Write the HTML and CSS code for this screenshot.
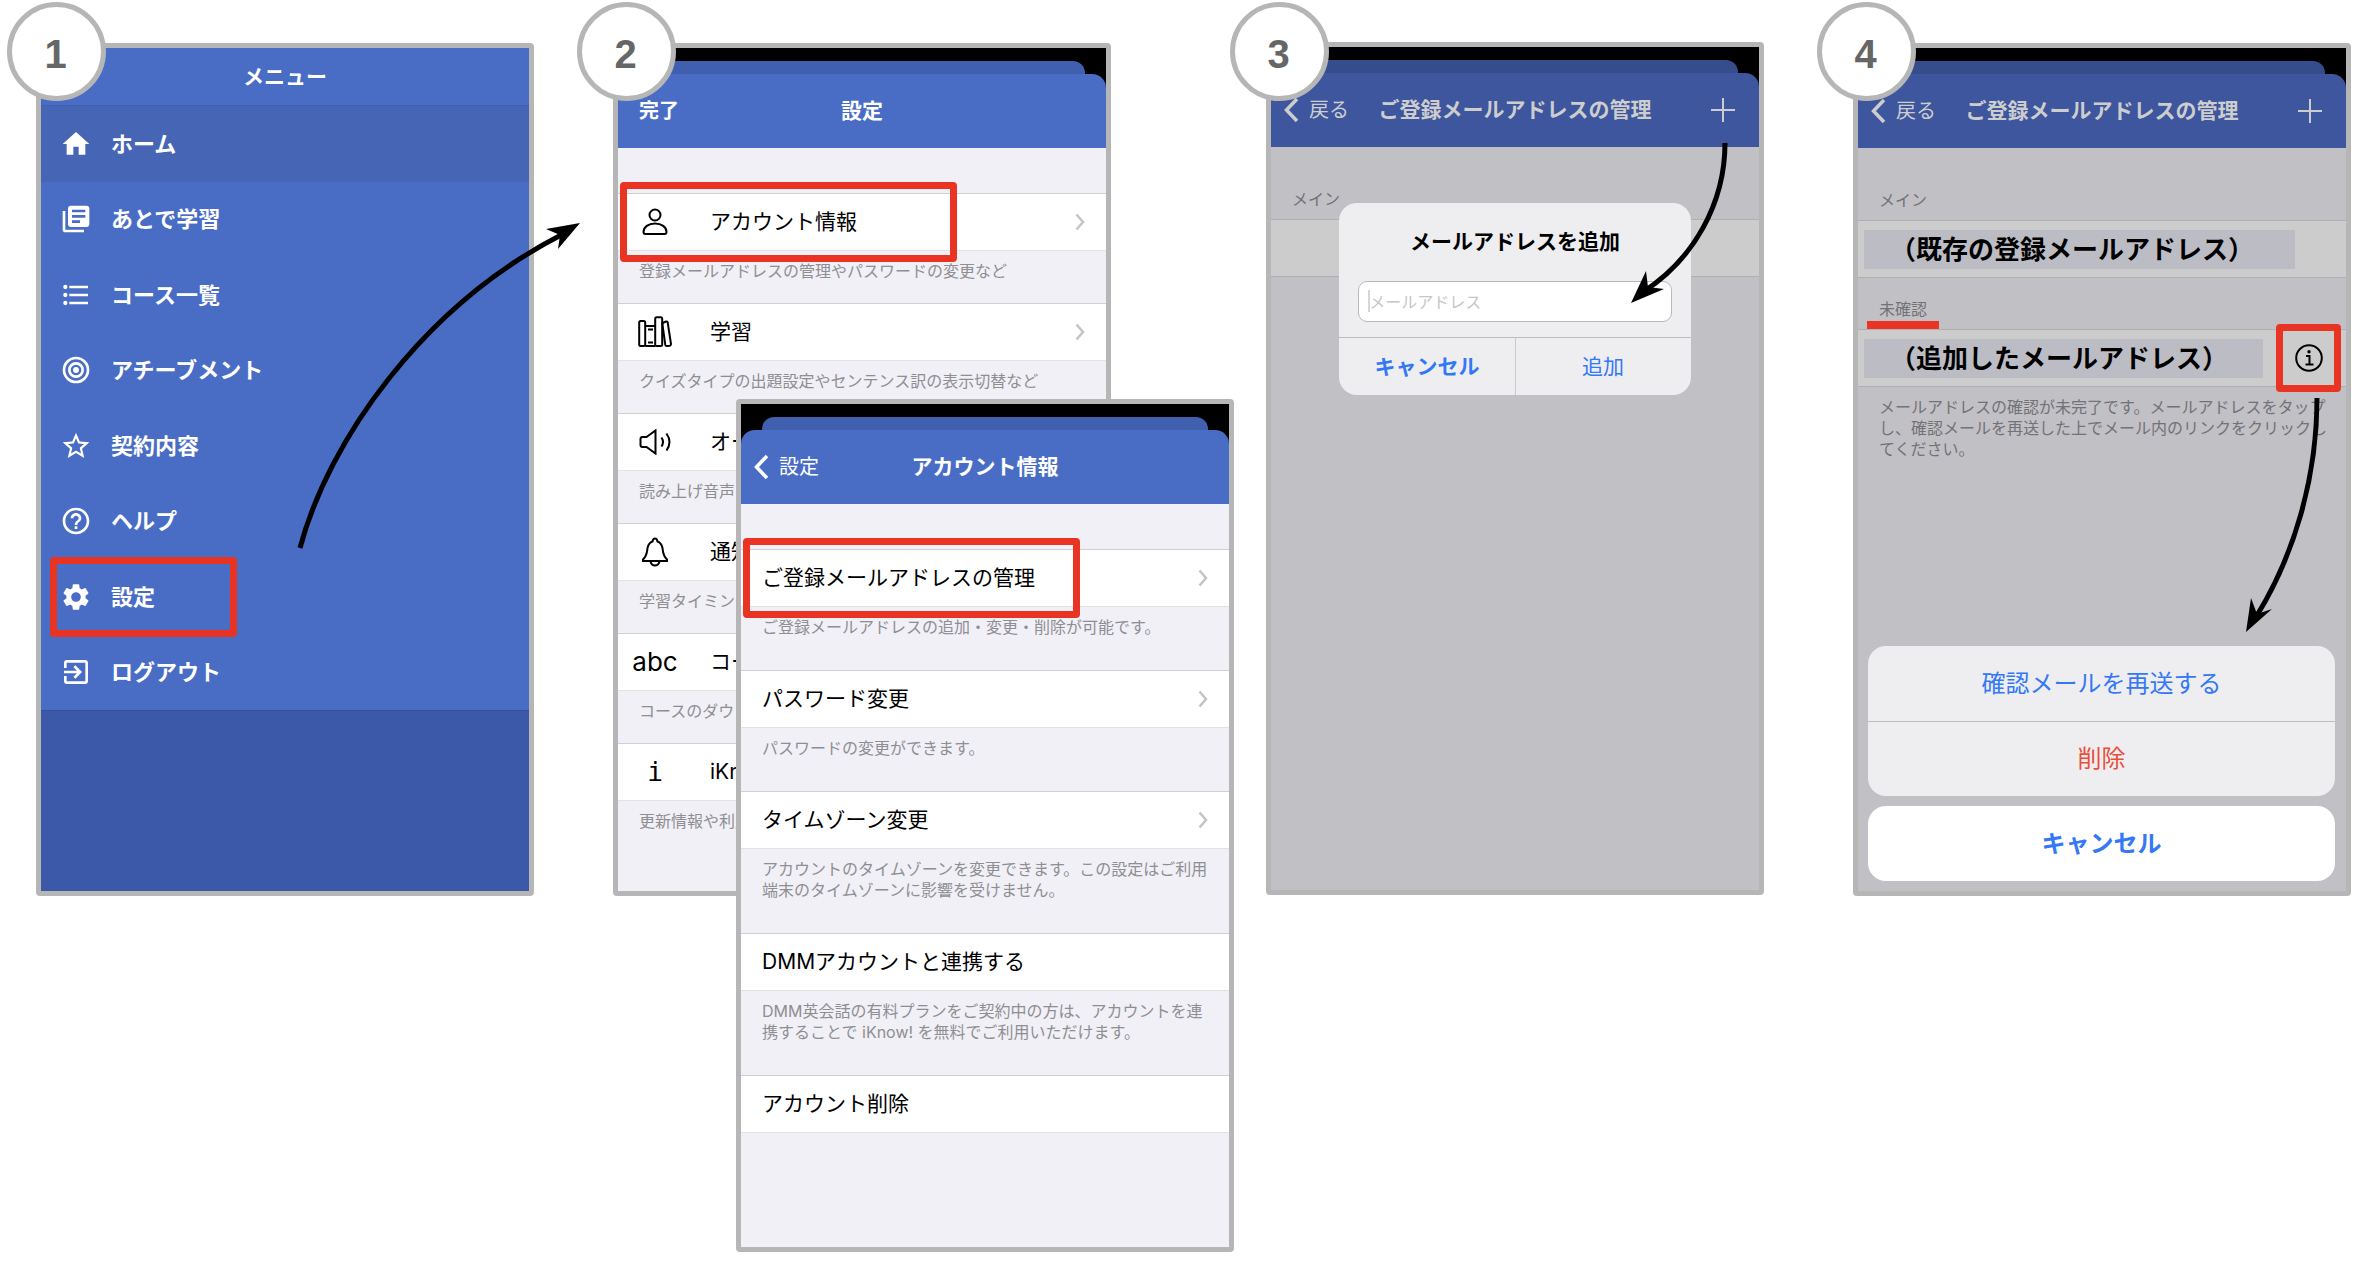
FILE: index.html
```html
<!DOCTYPE html>
<html lang="ja">
<head>
  <meta charset="UTF-8">
  <title>メールアドレスの追加手順</title>
  <link rel="stylesheet" href="styles.css">
</head>
<body>
  <svg class="symbols" aria-hidden="true">
    <symbol id="chevron" viewBox="0 0 10 18"><path d="M1.5 1.5 8 9l-6.500 7.500" fill="none" stroke="currentColor" stroke-width="2.500"/></symbol>
    <symbol id="back" viewBox="0 0 16 26"><path d="M14 2 3.500 13 14 24" fill="none" stroke="currentColor" stroke-width="3.500"/></symbol>
    <symbol id="plus" viewBox="0 0 24 24"><path d="M12 0v24M0 12h24" fill="none" stroke="currentColor" stroke-width="2"/></symbol>
  </svg>

  <main class="steps">
    <!-- 1: メニュー -->
    <section class="step">
      <div class="phone phone-menu">
        <h2 class="menu-title">メニュー</h2>
        <nav class="menu">
          <a href="#" class="menu-item current">
            <svg viewBox="0 0 24 24"><path d="M10 20v-6h4v6h5v-8h3L12 3 2 12h3v8z"/></svg>
            ホーム
          </a>
          <a href="#" class="menu-item">
            <svg viewBox="0 0 24 24"><path d="M4 6H2v14c0 1.100.9 2 2 2h14v-2H4V6zm16-4H8c-1.100 0-2 .9-2 2v12c0 1.100.9 2 2 2h12c1.100 0 2-.9 2-2V4c0-1.100-.9-2-2-2zm-1 9H9V9h10v2zm-4 4H9v-2h6v2zm4-8H9V5h10v2z"/></svg>
            あとで学習
          </a>
          <a href="#" class="menu-item">
            <svg viewBox="0 0 24 24"><circle cx="4" cy="6" r="1.600"/><circle cx="4" cy="12" r="1.600"/><circle cx="4" cy="18" r="1.600"/><path d="M7 5h14v2H7zM7 11h14v2H7zM7 17h14v2H7z"/></svg>
            コース一覧
          </a>
          <a href="#" class="menu-item">
            <svg viewBox="0 0 24 24"><g fill="none" stroke="#fff" stroke-width="2"><circle cx="12" cy="12" r="9"/><circle cx="12" cy="12" r="5"/></g><circle cx="12" cy="12" r="2.200"/></svg>
            アチーブメント
          </a>
          <a href="#" class="menu-item">
            <svg viewBox="0 0 24 24"><path d="M22 9.240l-7.190-.62L12 2 9.190 8.630 2 9.240l5.460 4.730L5.820 21 12 17.270 18.180 21l-1.630-7.030L22 9.240zM12 15.400l-3.760 2.270 1-4.280-3.320-2.880 4.380-.38L12 6.100l1.710 4.040 4.380.38-3.320 2.880 1 4.280L12 15.400z"/></svg>
            契約内容
          </a>
          <a href="#" class="menu-item">
            <svg viewBox="0 0 24 24"><path d="M11 18h2v-2h-2v2zm1-16C6.480 2 2 6.480 2 12s4.480 10 10 10 10-4.480 10-10S17.520 2 12 2zm0 18c-4.410 0-8-3.590-8-8s3.590-8 8-8 8 3.590 8 8-3.590 8-8 8zm0-14c-2.210 0-4 1.790-4 4h2c0-1.100.9-2 2-2s2 .9 2 2c0 2-3 1.750-3 5h2c0-2.250 3-2.500 3-5 0-2.210-1.790-4-4-4z"/></svg>
            ヘルプ
          </a>
          <a href="#" class="menu-item">
            <svg viewBox="0 0 24 24"><path d="M19.140 12.940c.04-.3.060-.61.060-.94 0-.32-.02-.64-.07-.94l2.030-1.580a.49.490 0 0 0 .12-.61l-1.920-3.320a.488.488 0 0 0-.59-.22l-2.390.96c-.5-.38-1.030-.7-1.620-.94l-.36-2.540a.484.484 0 0 0-.48-.41h-3.840c-.24 0-.43.170-.47.410l-.36 2.540c-.59.240-1.130.570-1.620.940l-2.390-.96c-.22-.08-.47 0-.59.220L2.740 8.870c-.12.210-.08.470.12.610l2.030 1.580c-.05.300-.09.630-.09.940s.02.640.070.940l-2.030 1.580a.49.490 0 0 0-.12.610l1.920 3.320c.12.220.37.290.59.220l2.390-.96c.5.380 1.030.7 1.620.94l.36 2.540c.05.240.24.410.48.410h3.840c.24 0 .44-.17.470-.41l.36-2.540c.59-.24 1.130-.56 1.620-.94l2.390.96c.22.080.47 0 .59-.22l1.920-3.320c.12-.22.070-.47-.12-.61l-2.010-1.580zM12 15.600c-1.980 0-3.600-1.620-3.600-3.600s1.620-3.600 3.600-3.600 3.600 1.620 3.600 3.600-1.620 3.600-3.600 3.600z"/></svg>
            設定
            <span class="highlight highlight-menu"></span>
          </a>
          <a href="#" class="menu-item">
            <svg viewBox="0 0 24 24"><path d="M10.090 15.590L11.500 17l5-5-5-5-1.410 1.410L12.670 11H3v2h9.670l-2.580 2.590zM19 3H5c-1.110 0-2 .9-2 2v4h2V5h14v14H5v-4H3v4c0 1.100.89 2 2 2h14c1.100 0 2-.9 2-2V5c0-1.100-.9-2-2-2z"/></svg>
            ログアウト
          </a>
        </nav>
      </div>
      <span class="badge">1</span>
      <svg class="arrow arrow-menu" viewBox="0 0 300 340">
        <path class="arrow-line" d="M10 328C38 222 132 86 273 14"/>
        <path d="M290 3 256 9 270 15 268 29z"/>
      </svg>
    </section>

    <!-- 2: 設定 → アカウント情報 -->
    <section class="step step-settings">
      <div class="phone phone-back">
        <header class="top">
          <div class="sheet-edge"></div>
          <div class="navbar">
            <a href="#" class="nav-left nav-done">完了</a>
            <h2>設定</h2>
          </div>
        </header>
        <div class="list">
          <a href="#" class="cell">
            <span class="cell-icon"><svg width="26" height="28" viewBox="0 0 26 28"><circle cx="13" cy="7" r="5.500"/><path d="M1.500 24c0-5 5-8.500 11.500-8.500S24.500 19 24.500 24q0 2-2 2h-19q-2 0-2-2z"/></svg></span>
            アカウント情報
            <svg class="chevron"><use href="#chevron"/></svg>
            <span class="highlight"></span>
          </a>
          <p class="note">登録メールアドレスの管理やパスワードの変更など</p>
          <a href="#" class="cell">
            <span class="cell-icon"><svg width="34" height="32" viewBox="0 0 34 32"><rect x="1.200" y="5" width="6" height="25" rx="1.500"/><path d="M7.200 10h10M7.200 30h10"/><path d="M10 13.500h5M10 26.500h5"/><rect x="17.200" y="1.200" width="7" height="28.800" rx="1.500"/><path d="M24.500 7 28 5.500q1.500-.3 1.700 1L33 28q0 1.500-1.200 1.700l-3 .4q-1.300 0-1.500-1.200L24.500 9z"/></svg></span>
            学習
            <svg class="chevron"><use href="#chevron"/></svg>
          </a>
          <p class="note">クイズタイプの出題設定やセンテンス訳の表示切替など</p>
          <a href="#" class="cell">
            <span class="cell-icon"><svg width="33" height="26" viewBox="0 0 33 26"><path d="M1.500 10q0-2 2-2h4L16.500 1.500v23L7.500 18h-4q-2 0-2-2z"/><path d="M22.500 8.500q3 4.500 0 9M27.500 4.500q6 8.500 0 17"/></svg></span>
            オー
          </a>
          <p class="note">読み上げ音声の</p>
          <a href="#" class="cell">
            <span class="cell-icon"><svg width="28" height="30" viewBox="0 0 28 30"><path d="M2 22.500C6 18.500 6 15.500 6.500 11Q7.500 6 11.500 4.500 12 1.500 14 1.500t2.500 3Q20.500 6 21.500 11c.5 4.500.5 7.500 4.500 11.500v1.500H2z"/><path d="M9.500 24.500q1 4 4.500 4t4.500-4"/></svg></span>
            通知
          </a>
          <p class="note">学習タイミング</p>
          <a href="#" class="cell">
            <span class="cell-icon">abc</span>
            コー
          </a>
          <p class="note">コースのダウン</p>
          <a href="#" class="cell">
            <span class="cell-icon mono">i</span>
            iKn
          </a>
          <p class="note">更新情報や利用</p>
        </div>
      </div>

      <div class="phone phone-front">
        <header class="top">
          <div class="sheet-edge"></div>
          <div class="navbar">
            <a href="#" class="nav-left"><svg class="back"><use href="#back"/></svg>設定</a>
            <h2>アカウント情報</h2>
          </div>
        </header>
        <div class="list list-roomy">
          <a href="#" class="cell">ご登録メールアドレスの管理
            <svg class="chevron"><use href="#chevron"/></svg>
            <span class="highlight"></span>
          </a>
          <p class="note">ご登録メールアドレスの追加・変更・削除が可能です。</p>
          <a href="#" class="cell">パスワード変更
            <svg class="chevron"><use href="#chevron"/></svg>
          </a>
          <p class="note">パスワードの変更ができます。</p>
          <a href="#" class="cell">タイムゾーン変更
            <svg class="chevron"><use href="#chevron"/></svg>
          </a>
          <p class="note">アカウントのタイムゾーンを変更できます。この設定はご利用端末のタイムゾーンに影響を受けません。</p>
          <a href="#" class="cell">DMMアカウントと連携する</a>
          <p class="note">DMM英会話の有料プランをご契約中の方は、アカウントを連携することで iKnow! を無料でご利用いただけます。</p>
          <a href="#" class="cell">アカウント削除</a>
        </div>
      </div>
      <span class="badge">2</span>
    </section>

    <!-- 3: メールアドレスを追加 -->
    <section class="step step-add">
      <div class="phone dimmed">
        <header class="top">
          <div class="sheet-edge"></div>
          <div class="navbar">
            <a href="#" class="nav-left"><svg class="back"><use href="#back"/></svg>戻る</a>
            <h2>ご登録メールアドレスの管理</h2>
            <button type="button" class="nav-add" aria-label="追加"><svg><use href="#plus"/></svg></button>
          </div>
        </header>
        <h3 class="section-title">メイン</h3>
        <div class="cell"></div>

        <form class="alert">
          <label class="alert-title" for="email">メールアドレスを追加</label>
          <div class="alert-field">
            <input type="email" id="email" placeholder="メールアドレス">
            <span class="caret"></span>
          </div>
          <div class="alert-actions">
            <button type="button" class="strong">キャンセル</button>
            <button type="button">追加</button>
          </div>
        </form>
      </div>
      <span class="badge">3</span>
      <svg class="arrow arrow-add" viewBox="0 0 110 170">
        <path class="arrow-line" d="M99 3C99 63 68 119 17 152"/>
        <path d="M5 163 20 131 22 147 38 149z"/>
      </svg>
    </section>

    <!-- 4: 確認メールの再送 -->
    <section class="step step-confirm">
      <div class="phone dimmed">
        <header class="top">
          <div class="sheet-edge"></div>
          <div class="navbar">
            <a href="#" class="nav-left"><svg class="back"><use href="#back"/></svg>戻る</a>
            <h2>ご登録メールアドレスの管理</h2>
            <button type="button" class="nav-add" aria-label="追加"><svg><use href="#plus"/></svg></button>
          </div>
        </header>
        <h3 class="section-title">メイン</h3>
        <div class="cell cell-mail">
          <span class="mail">（既存の登録メールアドレス）</span>
        </div>
        <h3 class="section-title"><span class="marked">未確認</span></h3>
        <div class="cell cell-mail">
          <span class="mail mail-short">（追加したメールアドレス）</span>
          <button type="button" class="info" aria-label="詳細">
            <svg viewBox="0 0 28 28"><circle cx="14" cy="14" r="12.800"/><path d="M11 12h3.500v8.500M10.500 20.500h8"/><circle class="dot" cx="14" cy="7.800" r="1.700"/></svg>
            <span class="highlight highlight-info"></span>
          </button>
        </div>
        <p class="note">メールアドレスの確認が未完了です。メールアドレスをタップし、確認メールを再送した上でメール内のリンクをクリックしてください。</p>

        <div class="actions">
          <div class="action-group">
            <button type="button">確認メールを再送する</button>
            <button type="button" class="danger">削除</button>
          </div>
          <button type="button" class="cancel">キャンセル</button>
        </div>
      </div>
      <span class="badge">4</span>
      <svg class="arrow arrow-confirm" viewBox="0 0 85 245">
        <path class="arrow-line" d="M77 3C77 83 54 161 16 222"/>
        <path d="M6 237 11 203 17 219 32 214z"/>
      </svg>
    </section>
  </main>
</body>
</html>
```

FILE: styles.css
```css
* {
  box-sizing: border-box;
}

body {
  margin: 0;
  background-color: #fff;
  color: #000;
  font-family: Inter, "Noto Sans CJK JP", sans-serif;
  font-size: 21px;
  line-height: 30px;
}

h2,
h3,
p {
  margin: 0;
  font-size: inherit;
}

a {
  color: inherit;
  text-decoration: none;
}

button {
  padding: 0;
  border: none;
  background: none;
  color: inherit;
  font: inherit;
  cursor: pointer;
}

.symbols {
  display: none;
}

.steps {
  display: flex;
  align-items: flex-start;
  padding: 0 11px 12px 36px;
}

.step {
  position: relative;
  flex: 498 1 0;
  min-width: 0;
  padding-top: 43px;
}

.step-settings {
  display: grid;
  grid-template-columns: 123fr 375fr 123fr;
  align-items: start;
  flex-grow: 621;
  margin-left: 79px;
}

.step-add {
  margin-left: 32px;
  padding-top: 42px;
}

.step-confirm {
  margin-left: 89px;
}

.phone {
  position: relative;
  min-height: 853px;
  border: 5px solid #b6b6b6;
  border-radius: 4px;
  background-color: #f1f0f6;
}

.phone-back {
  grid-area: 1 / 1 / 2 / 3;
}

.phone-front {
  grid-area: 1 / 2 / 2 / 4;
  margin-top: 356px;
}

.badge {
  position: absolute;
  top: 2px;
  left: -36px;
  width: 99px;
  height: 99px;
  padding: 4px 2px 0 0;
  border: 5px solid #b6b6b6;
  border-radius: 50%;
  background-color: #fff;
  color: #666;
  font-family: "Liberation Sans", Arial, sans-serif;
  font-size: 40px;
  font-weight: bold;
  line-height: 86px;
  text-align: center;
}

.step:first-child .badge {
  left: -29px;
}

/* メニュー */
.phone-menu {
  background-color: #3c59a9;
  color: #fff;
  font-size: 22px;
  font-weight: bold;
}

.menu-title {
  padding: 14px 0 13px;
  border-bottom: 1px solid #4060af;
  background-color: #496dc5;
  font-size: 21px;
  text-align: center;
}

.menu {
  display: flex;
  flex-direction: column;
  height: 605px;
  border-bottom: 1px solid #35509a;
  background-color: #496dc5;
}

.menu-item {
  position: relative;
  display: flex;
  flex: 1;
  align-items: center;
  gap: 19px;
  padding-left: 19px;
}

.menu-item svg {
  width: 32px;
  height: 32px;
  fill: #fff;
}

.menu-item.current {
  background-color: #4666b5;
}

/* ナビゲーションバー */
.top {
  padding-top: 13px;
  background-color: #000;
  color: #fff;
}

.sheet-edge {
  height: 13px;
  margin: 0 21px;
  border-radius: 12px 12px 0 0;
  background-color: #405fae;
}

.navbar {
  display: grid;
  grid-template-columns: 1fr auto 1fr;
  align-items: center;
  height: 74px;
  padding: 0 12px;
  border-radius: 14px 14px 0 0;
  background-color: #496dc5;
}

.navbar h2 {
  grid-column: 2;
}

.nav-left {
  display: flex;
  align-items: center;
  gap: 10px;
  font-size: 20px;
}

.nav-done {
  padding-left: 9px;
  font-weight: bold;
}

.back {
  width: 16px;
  height: 26px;
}

.nav-add {
  justify-self: end;
  width: 24px;
  height: 24px;
  margin-right: 12px;
  line-height: 0;
}

.nav-add svg {
  width: 24px;
  height: 24px;
}

/* リスト */
.list {
  padding-top: 45px;
}

.cell {
  position: relative;
  display: flex;
  align-items: center;
  height: 58px;
  padding: 0 21px;
  border-top: 1px solid #d0d0d4;
  border-bottom: 1px solid #e2e2e5;
  background-color: #fff;
}

.cell-icon {
  display: flex;
  justify-content: center;
  width: 44px;
  margin: 0 33px 0 -6px;
  font-size: 26px;
}

.cell-icon svg {
  fill: none;
  stroke: #000;
  stroke-width: 2;
}

.cell-icon.mono {
  font-family: "DejaVu Sans Mono", monospace;
}

.chevron {
  width: 10px;
  height: 18px;
  margin-left: auto;
  color: #c4c4c7;
}

.note {
  padding: 10px 16px 21px 21px;
  color: #8e8e93;
  font-size: 16px;
  line-height: 21px;
}

.list-roomy .note {
  padding-bottom: 32px;
}

.highlight {
  position: absolute;
  top: calc(50% - 40px);
  left: 2px;
  width: 337px;
  height: 80px;
  border: 7px solid #e93323;
  border-radius: 4px;
  pointer-events: none;
}

.highlight-menu {
  left: 9px;
  width: 187px;
}

/* ダイアログの背後の画面 */
.dimmed {
  background-color: #c1c0c5;
}

.dimmed .top {
  color: #cdcdcd;
}

.dimmed .sheet-edge {
  background-color: #354d8b;
}

.dimmed .navbar {
  background-color: #3d569e;
}

.dimmed .cell {
  border-color: #b0afb3;
  background-color: #ccc;
}

.dimmed .note,
.section-title {
  color: #737277;
}

.section-title {
  padding: 21px 21px 9px;
  font-size: 16px;
  font-weight: normal;
  line-height: 21px;
}

.top + .section-title {
  padding-top: 42px;
}

.marked {
  position: relative;
}

.marked::after {
  content: "";
  position: absolute;
  top: 22px;
  left: -12px;
  width: 72px;
  height: 8px;
  background-color: #e93323;
}

.cell-mail {
  justify-content: space-between;
  padding: 0 23px 0 6px;
}

.mail {
  width: 94%;
  padding-left: 26px;
  background-color: #bcbdc4;
  font-size: 26px;
  font-weight: bold;
  line-height: 39px;
  white-space: nowrap;
}

.mail-short {
  width: 87%;
}

.info {
  position: relative;
  width: 28px;
  height: 28px;
  line-height: 0;
}

.info svg {
  fill: none;
  stroke: #000;
  stroke-width: 2;
}

.info .dot {
  fill: #000;
  stroke: none;
}

.highlight-info {
  top: -20px;
  left: -19px;
  width: 65px;
  height: 68px;
}

/* 追加ダイアログ */
.alert {
  position: absolute;
  top: 156px;
  left: 14%;
  width: 72%;
  border-radius: 18px;
  background-color: #eeeef0;
}

.alert-title {
  display: block;
  padding: 24px 20px 0;
  font-weight: bold;
  text-align: center;
}

.alert-field {
  position: relative;
  padding: 24px 19px 15px;
}

.alert-field input {
  display: block;
  width: 100%;
  height: 41px;
  padding: 0 10px;
  border: 1px solid #b9b9bb;
  border-radius: 9px;
  background-color: #fff;
  font: inherit;
  font-size: 16px;
}

.alert-field input::placeholder {
  color: #c6c6c8;
}

.caret {
  position: absolute;
  top: 33px;
  left: 29px;
  width: 2px;
  height: 22px;
  background-color: #d5d5d8;
}

.alert-actions {
  display: flex;
  border-top: 1px solid #bdbdbf;
  color: #3478f6;
}

.alert-actions button {
  flex: 1;
  height: 57px;
}

.alert-actions button + button {
  border-left: 1px solid #c8c8ca;
}

.alert-actions .strong {
  font-weight: bold;
}

/* アクションシート */
.actions {
  position: absolute;
  right: 11px;
  bottom: 10px;
  left: 10px;
  color: #3478f6;
  font-size: 24px;
}

.actions button {
  display: block;
  width: 100%;
  height: 75px;
}

.action-group {
  margin-bottom: 10px;
  border-radius: 18px;
  background-color: #eeeef0;
}

.action-group .danger {
  border-top: 1px solid #bdbdc0;
  color: #eb4d3d;
}

.actions .cancel {
  border-radius: 18px;
  background-color: #fff;
  font-weight: bold;
}

/* 矢印 */
.arrow {
  position: absolute;
  pointer-events: none;
  z-index: 1;
}

.arrow-line {
  fill: none;
  stroke: #000;
  stroke-width: 5;
}

.arrow-menu {
  top: 220px;
  right: -56px;
  width: 300px;
  height: 340px;
}

.arrow-add {
  top: 140px;
  right: 28px;
  width: 110px;
  height: 170px;
}

.arrow-confirm {
  top: 395px;
  right: 26px;
  width: 85px;
  height: 245px;
}
```
